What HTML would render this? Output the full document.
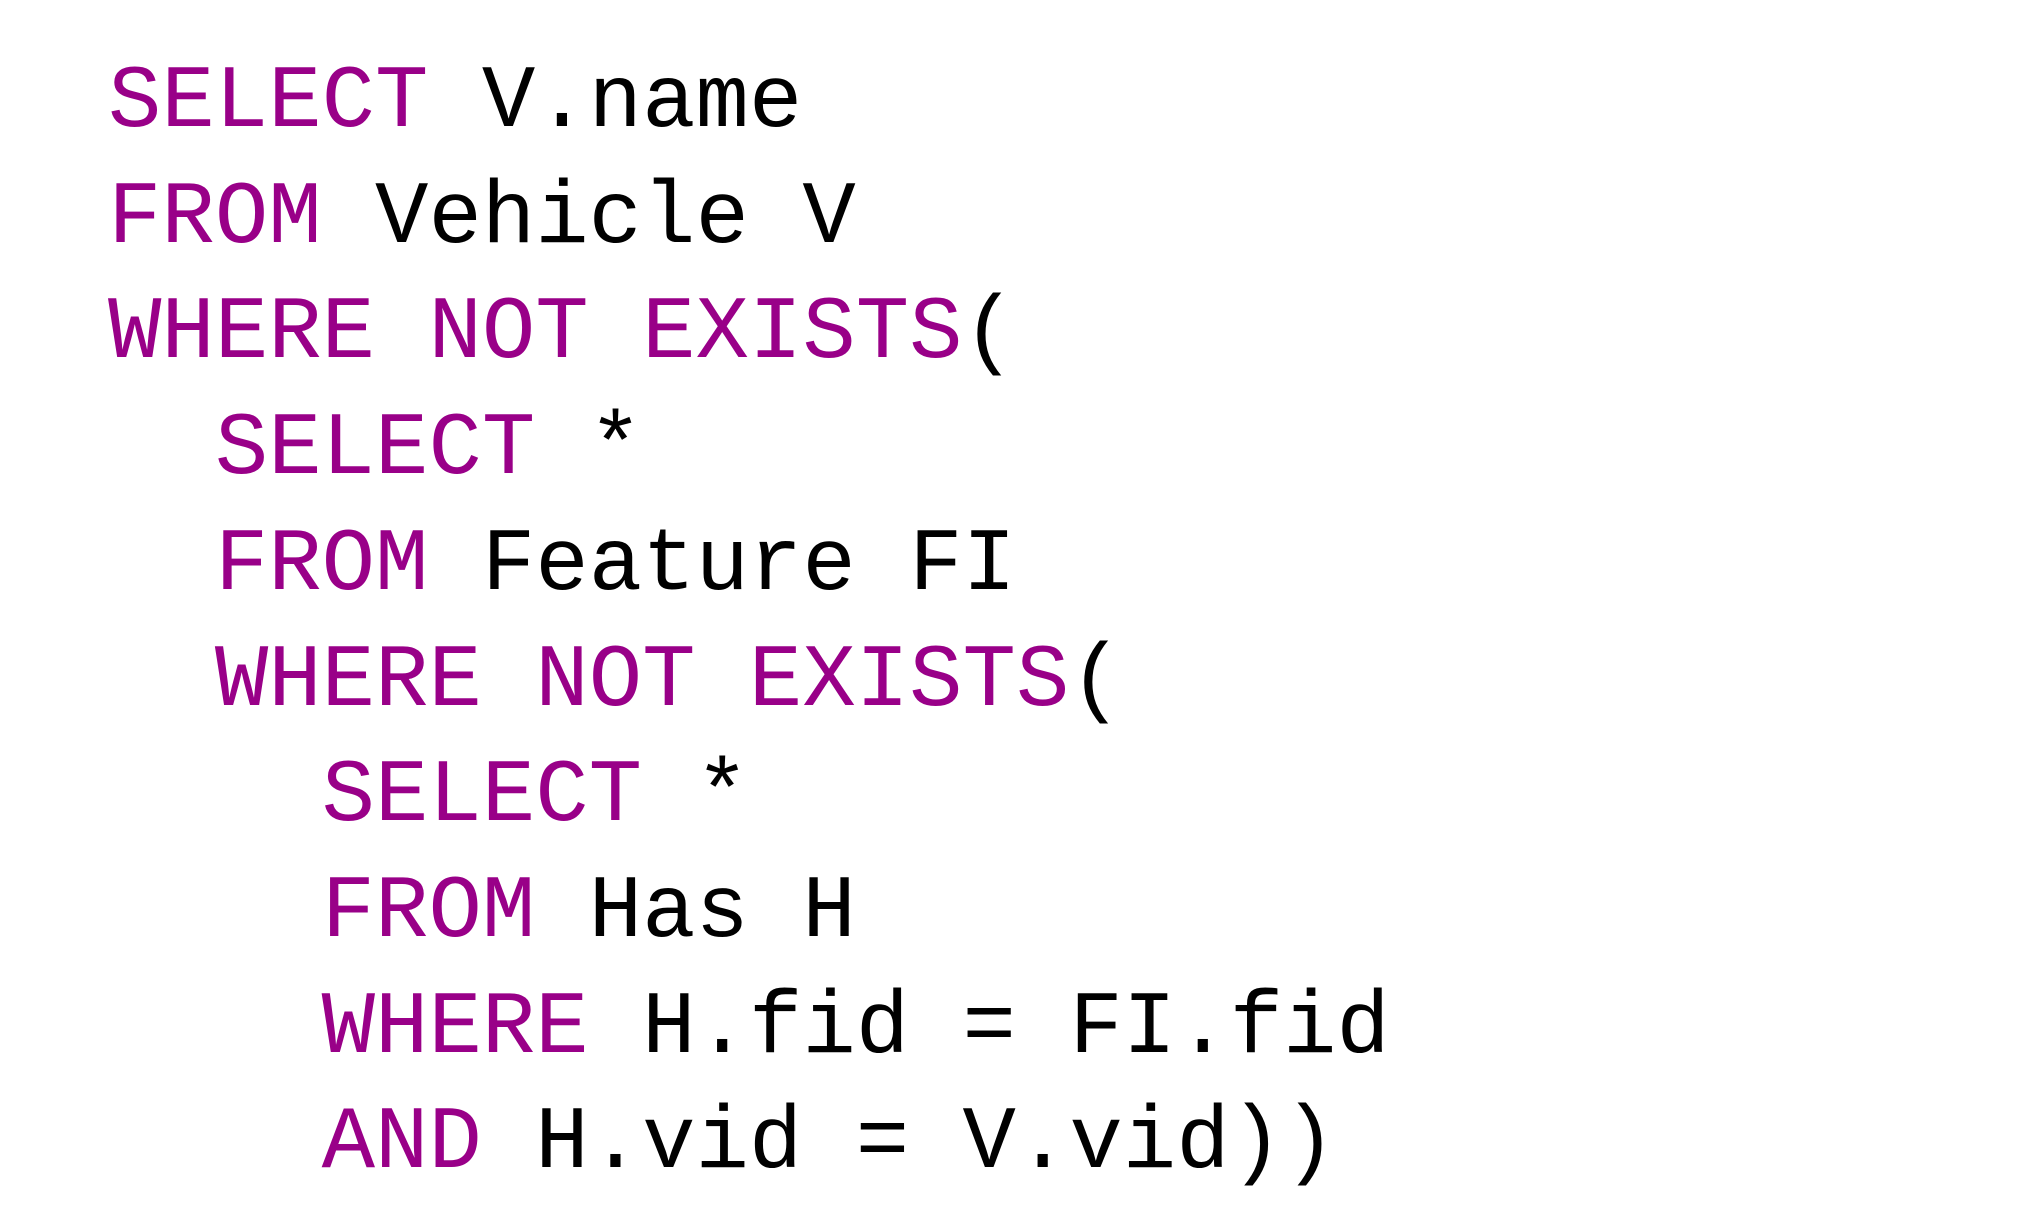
<!DOCTYPE html>
<html><head><style>
html,body{margin:0;padding:0;background:#fff;width:2028px;height:1228px;overflow:hidden}
pre{position:absolute;left:108px;top:45px;margin:0;font-family:"Liberation Mono",monospace;font-size:89px;line-height:115.7px;color:#000}
.k{color:#990088}
</style></head><body>
<pre><span class="k">SELECT</span> V.name
<span class="k">FROM</span> Vehicle V
<span class="k">WHERE NOT EXISTS</span>(
  <span class="k">SELECT</span> *
  <span class="k">FROM</span> Feature FI
  <span class="k">WHERE NOT EXISTS</span>(
    <span class="k">SELECT</span> *
    <span class="k">FROM</span> Has H
    <span class="k">WHERE</span> H.fid = FI.fid
    <span class="k">AND</span> H.vid = V.vid))</pre>
</body></html>
